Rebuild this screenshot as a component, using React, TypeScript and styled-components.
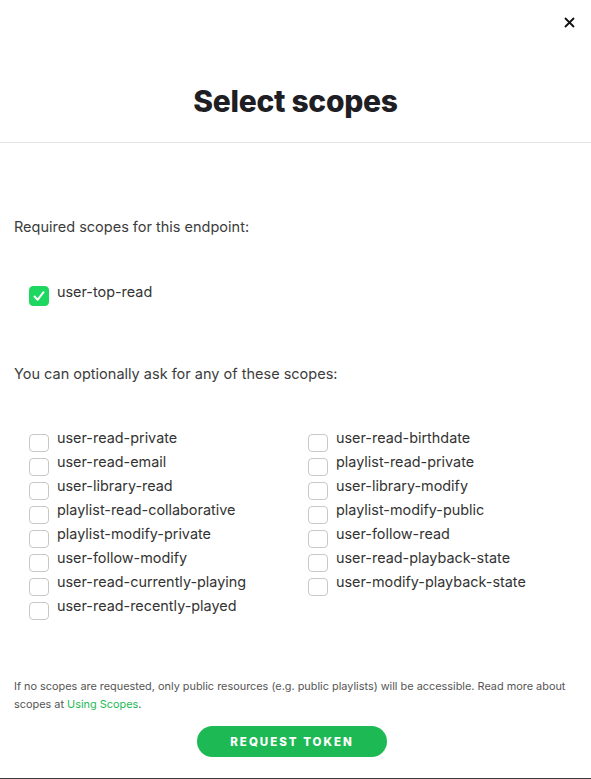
import styled, { createGlobalStyle } from 'styled-components';

const GlobalStyle = createGlobalStyle`
  html, body {
    margin: 0;
    padding: 0;
    background: #ffffff;
  }
  * {
    box-sizing: border-box;
  }
`;

const Modal = styled.div`
  width: 591px;
  height: 779px;
  background: #ffffff;
  border-bottom: 1px solid #3a3a3a;
  font-family: Inter, 'Liberation Sans', sans-serif;
  color: #333333;
  display: flex;
  flex-direction: column;
`;

const Header = styled.div`
  display: flex;
  flex-direction: column;
  padding-bottom: 24px;
  border-bottom: 1px solid #e3e3e3;
`;

const CloseRow = styled.div`
  height: 44px;
  display: flex;
  justify-content: flex-end;
  align-items: center;
  padding-right: 14px;
`;

const CloseButton = styled.button`
  width: 16px;
  height: 16px;
  padding: 0;
  border: none;
  background: none;
  display: flex;
  align-items: center;
  justify-content: center;
  cursor: pointer;
`;

const Title = styled.h1`
  margin: 40px 0 0;
  font-size: 30px;
  line-height: 34px;
  font-weight: 800;
  letter-spacing: -0.3px;
  color: #1e1e24;
  text-align: center;
`;

const Body = styled.div`
  padding: 0 14px;
  display: flex;
  flex-direction: column;
`;

const SectionText = styled.p<{ $top: number }>`
  margin: ${p => p.$top}px 0 0;
  font-size: 14.5px;
  line-height: 20px;
  color: #3c3c3c;
`;

const ScopeGrid = styled.div`
  margin: 44px 0 0 15px;
  display: grid;
  grid-template-columns: 279px 279px;
  grid-auto-flow: column;
  grid-template-rows: repeat(8, 24px);
`;

const RequiredRow = styled.div`
  margin: 45px 0 0 15px;
  height: 24px;
  display: flex;
  align-items: flex-start;
  gap: 8px;
`;

const ScopeRow = styled.label`
  height: 24px;
  display: flex;
  align-items: flex-start;
  gap: 8px;
`;

const Box = styled.span<{ $checked: boolean }>`
  flex-shrink: 0;
  width: 20px;
  height: ${p => (p.$checked ? '20px' : '18px')};
  margin-top: ${p => (p.$checked ? '4px' : '6px')};
  border-radius: 4px;
  border: 1px solid ${p => (p.$checked ? '#1ed760' : '#c8c8c8')};
  background: ${p => (p.$checked ? '#1ed760' : '#ffffff')};
  display: flex;
  align-items: center;
  justify-content: center;
`;

const ScopeLabel = styled.span`
  font-size: 14.4px;
  line-height: 20px;
  color: #333333;
`;

const Footer = styled.div`
  margin-top: 57px;
  padding: 0 14px;
  display: flex;
  flex-direction: column;
  align-items: center;
`;

const Note = styled.p`
  margin: 0;
  align-self: stretch;
  font-size: 10.9px;
  line-height: 18px;
  color: #555555;
`;

const NoteLink = styled.a`
  color: #1db954;
  text-decoration: none;
`;

const RequestButton = styled.button`
  margin: 13px 7px 0 0;
  width: 190px;
  height: 31px;
  border: none;
  border-radius: 16px;
  background: #1db954;
  color: #ffffff;
  font-family: Inter, 'Liberation Sans', sans-serif;
  font-weight: 800;
  font-size: 11.5px;
  letter-spacing: 2px;
  cursor: pointer;
`;

const optional = [
  'user-read-private',
  'user-read-email',
  'user-library-read',
  'playlist-read-collaborative',
  'playlist-modify-private',
  'user-follow-modify',
  'user-read-currently-playing',
  'user-read-recently-played',
  'user-read-birthdate',
  'playlist-read-private',
  'user-library-modify',
  'playlist-modify-public',
  'user-follow-read',
  'user-read-playback-state',
  'user-modify-playback-state',
];

function Check() {
  return (
    <svg width="14" height="14" viewBox="0 0 14 14" fill="none">
      <path d="M2.5 7.5 L5.6 10.8 L11.5 3.2" stroke="#ffffff" strokeWidth="2" strokeLinecap="round" strokeLinejoin="round" />
    </svg>
  );
}

export default function App() {
  return (
    <>
      <GlobalStyle />
      <Modal>
        <Header>
          <CloseRow>
            <CloseButton aria-label="Close">
              <svg width="11" height="11" viewBox="0 0 11 11">
                <path d="M1 1 L10 10 M10 1 L1 10" stroke="#111" strokeWidth="1.8" />
              </svg>
            </CloseButton>
          </CloseRow>
          <Title>Select scopes</Title>
        </Header>
        <Body>
          <SectionText $top={74}>Required scopes for this endpoint:</SectionText>
          <RequiredRow>
            <Box $checked={true}>
              <Check />
            </Box>
            <ScopeLabel>user-top-read</ScopeLabel>
          </RequiredRow>
          <SectionText $top={58}>You can optionally ask for any of these scopes:</SectionText>
          <ScopeGrid>
            {optional.map(scope => (
              <ScopeRow key={scope}>
                <Box $checked={false} />
                <ScopeLabel>{scope}</ScopeLabel>
              </ScopeRow>
            ))}
          </ScopeGrid>
        </Body>
        <Footer>
          <Note>
            If no scopes are requested, only public resources (e.g. public playlists) will be accessible. Read more about
            scopes at <NoteLink href="#">Using Scopes</NoteLink>.
          </Note>
          <RequestButton>REQUEST TOKEN</RequestButton>
        </Footer>
      </Modal>
    </>
  );
}
